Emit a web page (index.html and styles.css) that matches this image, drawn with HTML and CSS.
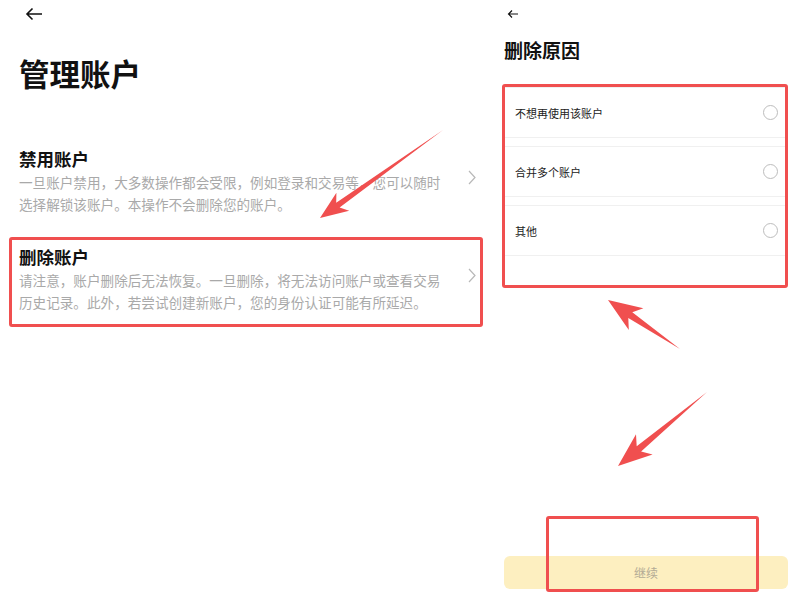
FILE: index.html
```html
<!DOCTYPE html>
<html lang="zh-CN">
<head>
    <meta charset="UTF-8">
    <meta name="viewport" content="width=device-width, initial-scale=1.0">
    <title>管理账户</title>
    <link rel="stylesheet" href="styles.css">
</head>
<body>
    <div class="screens">
        <div class="screen manage">
            <div class="topbar">
                <svg class="back" width="18" height="14" viewBox="0 0 18 14"><path d="M17 7H2M7.5 1.5L2 7l5.5 5.5" fill="none" stroke="#111" stroke-width="1.6"/></svg>
            </div>
            <h1 class="page-title">管理账户</h1>

            <div class="options">
                <div class="option">
                    <div class="option-text">
                        <div class="option-title">禁用账户</div>
                        <p class="option-desc">一旦账户禁用，大多数操作都会受限，例如登录和交易等，您可以随时选择解锁该账户。本操作不会删除您的账户。</p>
                    </div>
                    <svg class="chevron" width="8" height="15" viewBox="0 0 8 15"><path d="M1 1l6 6.5L1 14" fill="none" stroke="#b8b8b8" stroke-width="1.2"/></svg>
                </div>

                <div class="option marked">
                    <div class="option-text">
                        <div class="option-title">删除账户</div>
                        <p class="option-desc">请注意，账户删除后无法恢复。一旦删除，将无法访问账户或查看交易历史记录。此外，若尝试创建新账户，您的身份认证可能有所延迟。</p>
                    </div>
                    <svg class="chevron" width="8" height="15" viewBox="0 0 8 15"><path d="M1 1l6 6.5L1 14" fill="none" stroke="#b8b8b8" stroke-width="1.2"/></svg>
                </div>
            </div>
        </div>

        <div class="screen reason">
            <div class="topbar small">
                <svg class="back" width="12" height="10" viewBox="0 0 12 10"><path d="M11 5H1.5M5 1.5L1.5 5 5 8.5" fill="none" stroke="#111" stroke-width="1.2"/></svg>
            </div>
            <h2 class="reason-title">删除原因</h2>

            <div class="reason-list marked">
                <label class="reason-row"><span>不想再使用该账户</span><i class="radio"></i></label>
                <label class="reason-row"><span>合并多个账户</span><i class="radio"></i></label>
                <label class="reason-row"><span>其他</span><i class="radio"></i></label>
            </div>

            <button class="continue-btn">继续</button>
            <div class="btn-mark"></div>
        </div>

        <!-- annotation arrows -->
        <svg class="arrows" width="800" height="608" viewBox="0 0 800 608">
            <polygon points="320,218 349.2,210.7 339.6,207.6 443,130 336.2,202.8 336.4,192.7" fill="#f04f4f"/>
            <polygon points="608,300 643.4,308.3 632.3,312.3 680,349 628.3,318.1 628.8,329.9" fill="#f04f4f"/>
            <polygon points="618,466 652.6,454.5 641.1,451.6 707,392 636.7,446.2 636,434.3" fill="#f04f4f"/>
        </svg>
    </div>
</body>
</html>
```

FILE: styles.css
```css
body {
    margin: 0;
    background-color: #fff;
    font-family: "Noto Sans CJK SC", "Noto Sans", sans-serif;
    color: #111;
}
.screens {
    position: relative;
    display: flex;
    width: 800px;
    height: 608px;
    overflow: hidden;
}
.screen {
    display: flex;
    flex-direction: column;
}
.manage {
    width: 495px;
    padding-left: 9px;
    box-sizing: border-box;
}
.reason {
    flex: 1;
    padding: 0 12px 19px 8px;
}
.topbar {
    height: 28px;
    display: flex;
    align-items: center;
    padding-left: 16px;
}
.topbar.small {
    padding-left: 5px;
}
.page-title {
    margin: 27px 0 0 10px;
    font-size: 30.5px;
    line-height: 36px;
    font-weight: 700;
}
.options {
    display: flex;
    flex-direction: column;
    gap: 8px;
    margin-top: 48px;
}
.option {
    display: flex;
    align-items: center;
    width: 474px;
    box-sizing: border-box;
    padding: 4px 4px 11px 7px;
    border: 3px solid transparent;
    border-radius: 2px;
}
.marked {
    border: 3px solid #f04f4f;
    border-radius: 3px;
}
.option-text {
    flex: 1;
}
.option-title {
    font-size: 17.5px;
    line-height: 26px;
    font-weight: 700;
}
.option-desc {
    margin: 0;
    width: 432px;
    font-size: 13.6px;
    line-height: 21.5px;
    color: #a9a9a9;
}
.chevron {
    margin-bottom: 6px;
}
.reason-title {
    margin: 10px 0 0 2px;
    font-size: 19px;
    line-height: 24px;
    font-weight: 700;
}
.reason-list {
    margin-top: 22px;
    padding-bottom: 29px;
}
.reason-row {
    display: flex;
    align-items: center;
    justify-content: space-between;
    height: 49px;
    padding: 0 7px 0 10px;
    border-top: 1px solid #f0f0f0;
    border-bottom: 1px solid #f0f0f0;
    font-size: 11px;
    color: #222;
}
.reason-row + .reason-row {
    margin-top: 8px;
}
.radio {
    width: 13px;
    height: 13px;
    border: 1px solid #bdbdbd;
    border-radius: 50%;
}
.continue-btn {
    margin-top: auto;
    margin-left: 2px;
    width: 284px;
    height: 33px;
    border: none;
    border-radius: 6px;
    background-color: #fdefc0;
    color: #b3ab95;
    font-family: inherit;
    font-size: 12px;
}
.btn-mark {
    position: absolute;
    left: 546px;
    top: 516px;
    width: 207px;
    height: 70px;
    border: 3px solid #f04f4f;
    border-radius: 3px;
}
.arrows {
    position: absolute;
    left: 0;
    top: 0;
    pointer-events: none;
}
```
